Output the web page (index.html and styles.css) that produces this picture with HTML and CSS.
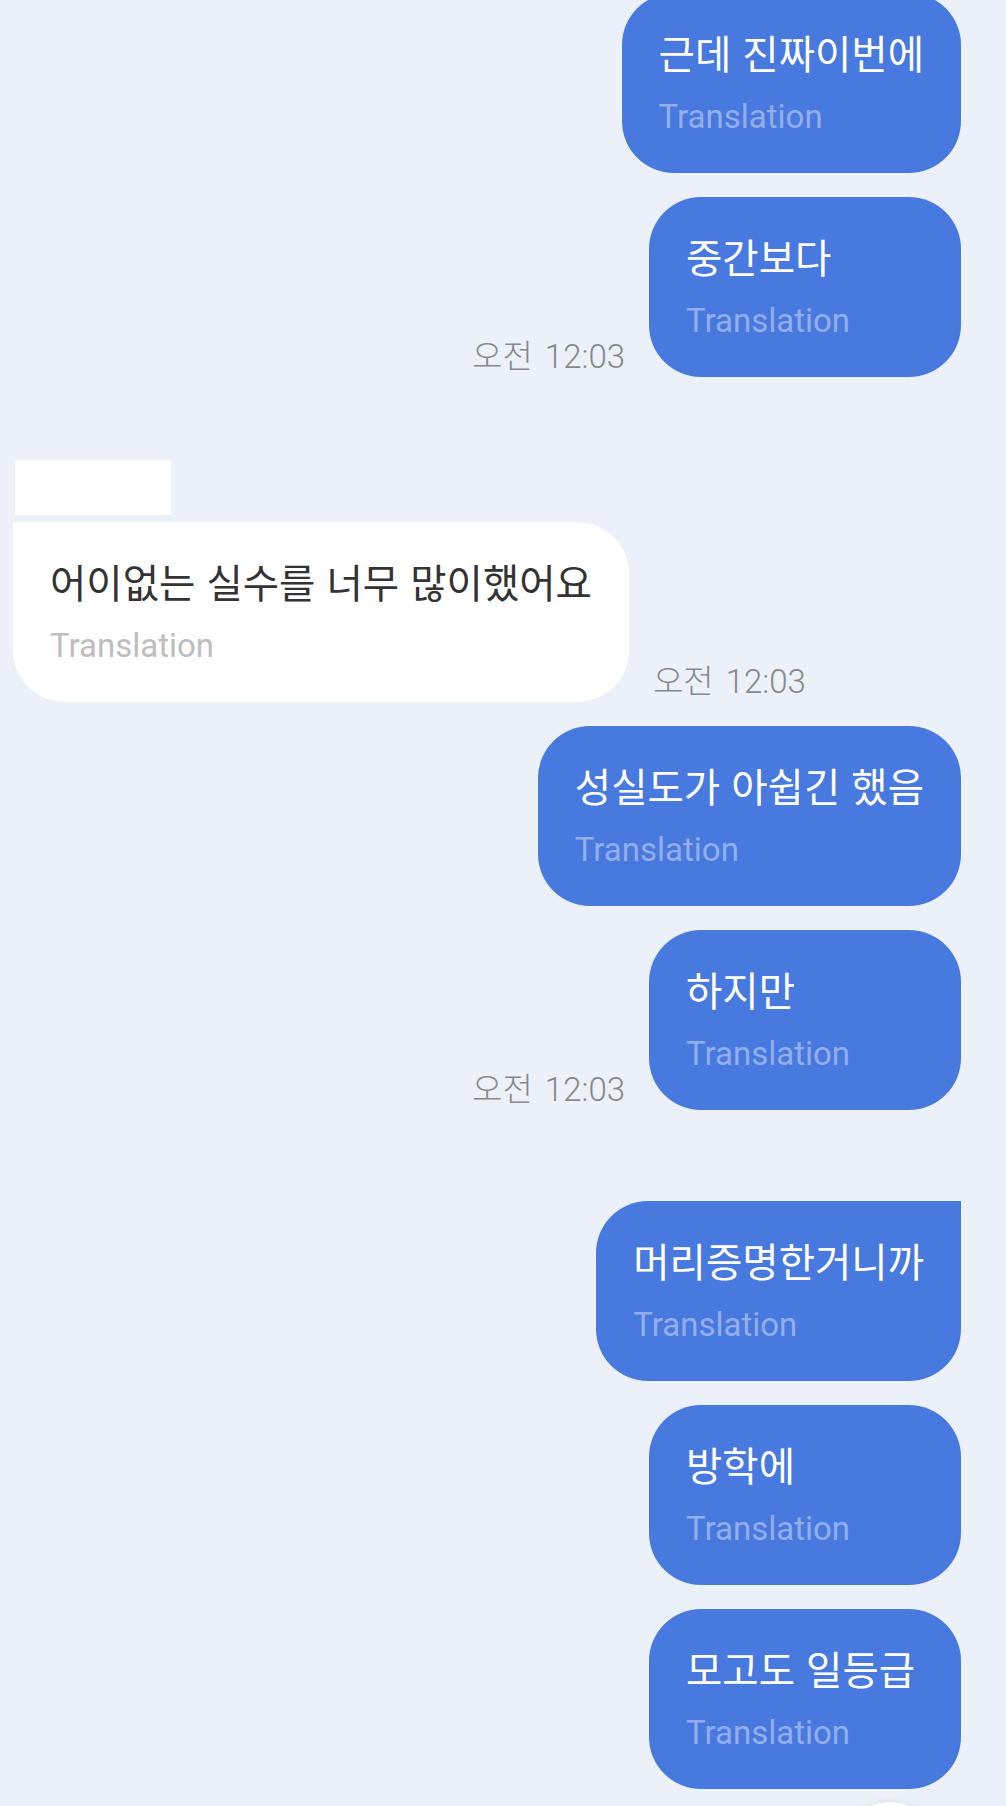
FILE: index.html
```html
<!DOCTYPE html>
<html lang="ko">
<head>
    <meta charset="UTF-8">
    <meta name="viewport" content="width=device-width, initial-scale=1.0">
    <title>Chat</title>
    <link rel="stylesheet" href="styles.css">
</head>
<body>

<div class="chat">
    <div class="row mine first">
        <div class="bubble">
            <div class="msg">근데 진짜이번에</div>
            <div class="trans">Translation</div>
        </div>
    </div>

    <div class="row mine">
        <span class="time">오전 12:03</span>
        <div class="bubble">
            <div class="msg">중간보다</div>
            <div class="trans">Translation</div>
        </div>
    </div>

    <div class="name-mask"></div>
    <div class="row theirs">
        <div class="bubble other head">
            <div class="msg">어이없는 실수를 너무 많이했어요</div>
            <div class="trans">Translation</div>
        </div>
        <span class="time">오전 12:03</span>
    </div>

    <div class="row mine">
        <div class="bubble">
            <div class="msg">성실도가 아쉽긴 했음</div>
            <div class="trans">Translation</div>
        </div>
    </div>

    <div class="row mine">
        <span class="time">오전 12:03</span>
        <div class="bubble">
            <div class="msg">하지만</div>
            <div class="trans">Translation</div>
        </div>
    </div>

    <div class="row mine group">
        <div class="bubble head">
            <div class="msg">머리증명한거니까</div>
            <div class="trans">Translation</div>
        </div>
    </div>

    <div class="row mine">
        <div class="bubble">
            <div class="msg">방학에</div>
            <div class="trans">Translation</div>
        </div>
    </div>

    <div class="row mine">
        <div class="bubble">
            <div class="msg">모고도 일등급</div>
            <div class="trans">Translation</div>
        </div>
    </div>
</div>

<div class="scroll-btn"></div>

</body>
</html>
```

FILE: styles.css
```css
html, body {
    margin: 0;
    height: 100%;
}
body {
    background-color: #ecf0f9;
    font-family: Roboto, "Noto Sans CJK KR", sans-serif;
    position: relative;
    overflow: hidden;
}
.chat {
    display: flex;
    flex-direction: column;
    gap: 24px;
    padding: 0 45px 0 13px;
}
.row {
    display: flex;
    align-items: flex-end;
    gap: 24px;
}
.row.mine {
    justify-content: flex-end;
}
.row.first {
    margin-top: -7px;
}
.row.group {
    margin-top: 67px;
}
.bubble {
    box-sizing: border-box;
    min-width: 312px;
    padding: 34px 37px 34px;
    border-radius: 52px;
    background-color: #4879de;
}
.bubble.head {
    border-top-right-radius: 0;
}
.bubble.other {
    background-color: #ffffff;
}
.bubble.other.head {
    border-top-right-radius: 52px;
    border-top-left-radius: 0;
}
.msg {
    font-family: "Noto Sans CJK KR", sans-serif;
    font-size: 39.5px;
    line-height: 50px;
    color: #ffffff;
    white-space: nowrap;
}
.other .msg {
    color: #333333;
}
.trans {
    margin-top: 18px;
    font-family: Roboto, sans-serif;
    font-size: 33px;
    line-height: 44px;
    color: #93aeeb;
}
.other .trans {
    color: #bdbdbd;
}
.time {
    font-family: Roboto, "Noto Sans CJK KR", sans-serif;
    font-size: 33px;
    font-weight: 300;
    line-height: 32px;
    word-spacing: 4px;
    margin-bottom: 4px;
    color: #888888;
    white-space: nowrap;
}
.name-mask {
    width: 156px;
    height: 55px;
    margin: 59px 0 -17px 2px;
    background-color: #ffffff;
}
.scroll-btn {
    position: absolute;
    top: 1802px;
    left: 842px;
    width: 96px;
    height: 96px;
    border-radius: 50%;
    background-color: #ffffff;
    box-shadow: 0 2px 10px rgba(0, 0, 0, 0.12);
}
```
